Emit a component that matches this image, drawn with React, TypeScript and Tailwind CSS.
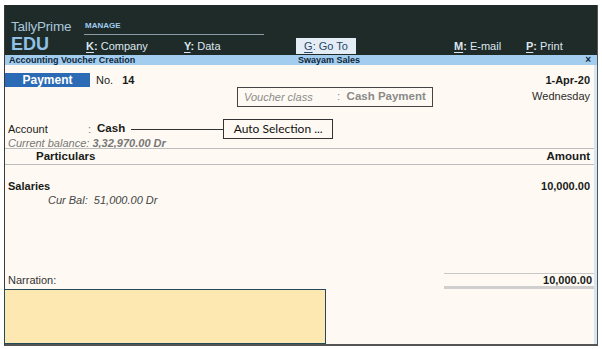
import React from "react";

const font = { fontFamily: '"Liberation Sans", Arial, sans-serif' };

function Key({ k, label, className = "" }: { k: string; label: string; className?: string }) {
  return (
    <span className={className}>
      <span className="underline underline-offset-2 font-bold">{k}</span>
      <span className="font-bold">:</span> {label}
    </span>
  );
}

export default function App() {
  return (
    <div className="w-[602px] h-[349px] bg-white pt-[5px] pl-[4px]" style={font}>
      <div className="w-[594px] h-[341px] flex flex-col border-l border-r border-b-2 border-l-[#3a3a3a] border-r-[#555] border-b-[#555]">
        {/* Header */}
        <div className="h-[50px] bg-[#1f2b29] flex shrink-0">
          <div className="w-[79px] pl-[6px] pt-[14px] flex flex-col">
            <span className="text-[13.5px] leading-[15px] text-[#a9c6dc] tracking-[-0.2px]">TallyPrime</span>
            <span className="text-[18px] leading-[20px] font-bold text-[#8fc0e6]">EDU</span>
          </div>
          <div className="flex flex-col pt-[15px]">
            <div className="w-[180px] border-b border-[#8a9aa4] h-[15px] text-[8px] font-bold text-[#9ecbee] leading-[12px] pl-[1px]">
              MANAGE
            </div>
            <div className="flex items-center h-[18px] mt-[2px] text-[11px] text-[#dde6ee]">
              <Key k="K" label="Company" className="w-[100px] pl-[2px]" />
              <Key k="Y" label="Data" className="w-[112px]" />
              <span className="w-[60px] h-[16px] bg-[#e4edf6] text-[#274868] flex items-center justify-center">
                <span className="underline underline-offset-2">G</span>: Go To
              </span>
              <Key k="M" label="E-mail" className="w-[72px] ml-[98px]" />
              <Key k="P" label="Print" />
            </div>
          </div>
        </div>
        {/* Title bar */}
        <div className="h-[10px] bg-[#a3cdee] flex items-center text-[9px] font-bold text-[#10263a] px-[4px] shrink-0 leading-none">
          <span className="w-[289px]">Accounting Voucher Creation</span>
          <span className="flex-1">Swayam Sales</span>
          <span className="text-[10px] pr-[2px]">×</span>
        </div>
        {/* Body */}
        <div className="flex-1 bg-[#fefaf3] border-r-[3px] border-[#d6e6f2] flex flex-col text-[11px] text-[#1a1a1a]">
          <div className="flex justify-between mt-[8px] h-[14px]">
            <div className="flex items-center">
              <span className="w-[85px] h-[14px] bg-[#2b6ab4] text-white font-bold text-[12px] flex items-center justify-center">
                Payment
              </span>
              <span className="ml-[6px]">No.</span>
              <span className="ml-[9px] font-bold">14</span>
            </div>
            <span className="font-bold pr-[4px] self-center">1-Apr-20</span>
          </div>
          <div className="flex h-[20px]">
            <div className="ml-[232px] w-[196px] h-[20px] border border-[#444] flex items-center text-[#8a8a8a]">
              <span className="italic ml-[6px] w-[93px]">Voucher class</span>
              <span className="font-bold text-[11.5px]">
                <span className="font-normal">:</span>&nbsp; Cash Payment
              </span>
            </div>
            <span className="ml-auto pr-[4px] pt-[3px] text-[#2a2a2a] leading-[13px]">Wednesday</span>
          </div>
          <div className="flex items-center h-[20px] mt-[12px]">
            <span className="ml-[3px] w-[80px]">Account</span>
            <span className="text-[#777]">:</span>
            <span className="ml-[6px] font-bold text-[11.5px]">Cash</span>
            <span className="ml-[6px] w-[92px] border-t border-[#333]"></span>
            <span
              className="w-[110px] h-[20px] border border-[#333] flex items-center justify-center text-[12px] text-[#111]"
              style={{ fontFamily: "Lato, 'Open Sans', sans-serif" }}
            >
              Auto Selection ...
            </span>
          </div>
          <div className="h-[12px] -mt-[2px] leading-[12px] italic text-[#777] ml-[3px]">
            Current balance: <span className="font-bold">3,32,970.00 Dr</span>
          </div>
          <div className="h-[17px] border-t border-b border-[#bdbdbd] flex items-center justify-between font-bold text-[11.5px] mt-[-1px]">
            <span className="ml-[31px]">Particulars</span>
            <span className="pr-[4px]">Amount</span>
          </div>
          <div className="flex justify-between font-bold mt-[15px] h-[12px] leading-[12px]">
            <span className="ml-[3px]">Salaries</span>
            <span className="pr-[4px]">10,000.00</span>
          </div>
          <div className="h-[12px] mt-[2px] leading-[12px] italic text-[#444] ml-[43px]">
            Cur Bal:&nbsp; 51,000.00 Dr
          </div>
          <div className="flex-1"></div>
          <div className="flex items-end h-[16px]">
            <span className="ml-[3px] text-[#333] leading-[12px] mb-[3px]">Narration:</span>
            <span className="ml-auto w-[150px] h-[16px] border-t border-[#c8c8c8] border-b-[3px] border-b-[#cfcfcf] text-right font-bold pr-[2px] leading-[12px]">
              10,000.00
            </span>
          </div>
          <div className="w-[322px] h-[55px] bg-[#fde8b1] border border-[#24495a] -ml-px"></div>
        </div>
      </div>
    </div>
  );
}
